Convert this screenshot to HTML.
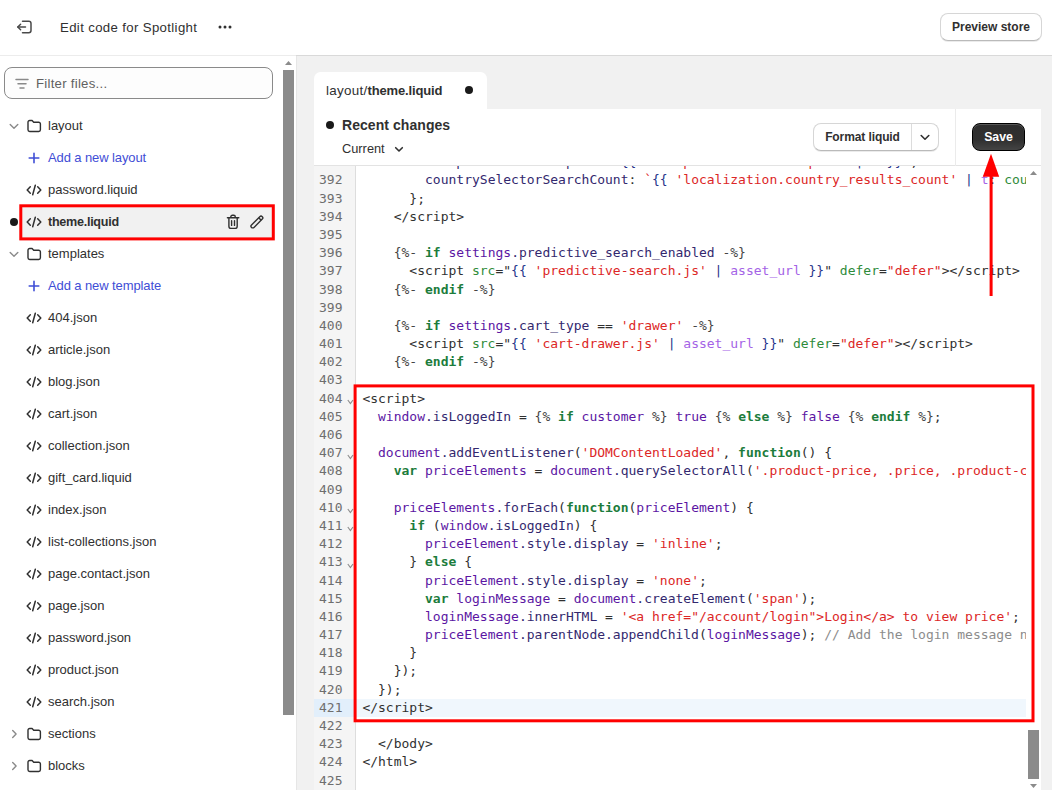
<!DOCTYPE html>
<html lang="en">
<head>
<meta charset="utf-8">
<title>Edit code for Spotlight</title>
<style>
*{box-sizing:border-box;margin:0;padding:0}
html,body{width:1052px;height:790px;overflow:hidden;background:#f1f1f1}
body{font-family:"Liberation Sans",sans-serif;color:#303030;position:relative;font-size:13px}
.abs{position:absolute}
/* header */
#hdr{position:absolute;left:0;top:0;width:1052px;height:56px;background:#fff;border-bottom:1px solid #d9d9d9;z-index:5}
#hdr:after{content:"";position:absolute;left:0;top:55px;width:296px;height:1px;background:#ececec}
#hdr .title{position:absolute;left:60px;top:19px;font-size:13.2px;line-height:18px;color:#303030;letter-spacing:.36px;white-space:nowrap}
#hdr .dots{position:absolute;left:218px;top:25px;width:14px;height:4px}
#hdr .prev{position:absolute;left:940px;top:13px;width:102px;height:28px;border:1px solid #d6d6d6;border-bottom-color:#bababa;border-radius:8px;background:#fff;font-weight:bold;font-size:12px;line-height:26px;text-align:center;color:#303030;white-space:nowrap;box-shadow:0 1px 0 rgba(0,0,0,.08)}
/* sidebar */
#side{position:absolute;left:0;top:56px;width:297px;height:734px;background:#fff;border-right:1px solid #e6e6e6}
#filter{position:absolute;left:4px;top:11px;width:269px;height:32px;border:1px solid #8a8a8a;border-radius:8px;background:#fdfdfd}
#filter span{position:absolute;left:31px;top:7px;font-size:13.2px;line-height:18px;color:#616161;white-space:nowrap;letter-spacing:.26px}
.row{position:absolute;left:0;width:283px;height:32px}
.row .t{position:absolute;left:48px;top:8px;font-size:13px;line-height:16px;white-space:nowrap;color:#303030}
.row .t.link{color:#3f4ed6;letter-spacing:-.1px}
.row svg{position:absolute}
.row.sel .t{font-weight:bold;font-size:12.6px;letter-spacing:-.28px}
#selbox{position:absolute;left:20px;top:149px;width:254px;height:35px;background:#f1f1f1}
#sbar{position:absolute;left:283px;top:0;width:13px;height:734px;background:#fff}
#sbar .thumb{position:absolute;left:0;top:14px;width:11px;height:645px;background:#8b8b8b}
/* main */
#tab{position:absolute;left:314px;top:72px;width:173px;height:38px;background:#fff;border-radius:6.5px 6.5px 0 0}
#tab .p{position:absolute;left:12px;top:10px;font-size:13.4px;line-height:18px;white-space:nowrap;color:#303030;letter-spacing:.3px}
#tab .p b{font-size:13px;letter-spacing:-.15px}
#tab .dot{position:absolute;left:151px;top:14px;width:8px;height:8px;border-radius:50%;background:#1a1a1a}
#card{position:absolute;left:314px;top:109px;width:727px;height:681px;background:#fff}
#tool{position:absolute;left:0;top:0;width:727px;height:57px;border-bottom:1px solid #e3e3e3}
#tool .rc{position:absolute;left:28px;top:7px;letter-spacing:.06px;font-size:14px;font-weight:bold;line-height:18px;color:#303030;white-space:nowrap}
#tool .rdot{position:absolute;left:12px;top:12px;width:8px;height:8px;border-radius:50%;background:#1a1a1a}
#tool .cur{position:absolute;left:28px;top:31px;font-size:12.8px;line-height:18px;color:#303030;white-space:nowrap}
#fmt{position:absolute;left:499px;top:14px;width:126px;height:28px;border:1px solid #d6d6d6;border-bottom-color:#bababa;border-radius:8px;background:#fff;box-shadow:0 1px 0 rgba(0,0,0,.08)}
#fmt .l{position:absolute;left:0;top:0;width:98px;height:26px;border-right:1px solid #dcdcdc;font-weight:bold;font-size:12px;letter-spacing:-.1px;line-height:26px;text-align:center;white-space:nowrap}
#sep{position:absolute;left:641px;top:0;width:1px;height:57px;background:#ebebeb}
#save{position:absolute;left:658px;top:14px;width:53px;height:28px;border-radius:8px;background:linear-gradient(180deg,#2e2e2e 0%,#303030 62%,#444 100%);border:1px solid #000;border-bottom-width:1.5px;color:#fff;font-weight:bold;font-size:12.3px;line-height:26px;text-align:center;box-shadow:inset 0 1px 0 rgba(255,255,255,.2)}
/* code */
#code{position:absolute;left:0;top:57px;width:712px;height:624px;overflow:hidden;background:#fff}
#gut{position:absolute;left:0;top:0;width:42px;height:624px;background:#f5f5f5;border-right:1px solid #ddd}
#lines{position:absolute;left:0;top:-12.8px;width:712px;font-family:"DejaVu Sans Mono","Liberation Mono",monospace;font-size:13px;line-height:18.2px;color:#303030}
.ln{position:relative;height:18.2px;white-space:pre}
.ln i{position:absolute;left:5px;top:0;font-style:normal;color:#6e6e6e}
.ln .fd{position:absolute;left:33px;top:9.3px}
.ln b{position:absolute;left:48.4px;top:0;font-weight:normal}
.ln.act{background:#f0f7fd}
.ln.act:before{content:"";position:absolute;left:0;top:0;width:41px;height:100%;background:#e2effb}
.k{color:#1c7c3c;font-weight:bold}
.v{color:#5b16a3}
.p{color:#33286e}
.s{color:#dc2626}
.a{color:#2e8b3a}
.d{color:#27348b}
.f{color:#a463e6}
.c{color:#8c8c8c}
.g{color:#454545}
#vs{position:absolute;left:713px;top:57px;width:14px;height:624px;background:#fff}
#vs .thumb{position:absolute;left:1px;top:564px;width:11px;height:49px;background:#8b8b8b}
#anno{position:absolute;left:0;top:0;z-index:9}
</style>
</head>
<body>
<div id="hdr">
  <svg class="abs" style="left:16px;top:18px" width="18" height="18" viewBox="0 0 18 18" fill="none" stroke="#4a4a4a" stroke-width="1.5" stroke-linecap="round" stroke-linejoin="round"><path d="M6.5 3.2h6.3a2.2 2.2 0 0 1 2.2 2.2v7.2a2.2 2.2 0 0 1-2.2 2.2H6.5"/><path d="M9.5 9H1.8"/><path d="M4.6 6.2 1.8 9l2.8 2.8"/></svg>
  <div class="title">Edit code for Spotlight</div>
  <svg class="dots" viewBox="0 0 14 4"><circle cx="2" cy="2" r="1.5" fill="#303030"/><circle cx="7" cy="2" r="1.5" fill="#303030"/><circle cx="12" cy="2" r="1.5" fill="#303030"/></svg>
  <div class="prev">Preview store</div>
</div>

<div id="side">
  <div id="filter">
    <svg class="abs" style="left:10px;top:10px" width="14" height="12" viewBox="0 0 14 12" fill="none" stroke="#8a8a8a" stroke-width="1.5" stroke-linecap="round"><path d="M1 1.5h12M3 5.8h8M5 10.1h4"/></svg>
    <span>Filter files...</span>
  </div>
  <div id="selbox"></div>
  <div id="rows">
<div class="row" style="top:54px"><svg style="left:9px;top:13px" width="10" height="7" viewBox="0 0 10 7" fill="none" stroke="#8a8a8a" stroke-width="1.4" stroke-linecap="round" stroke-linejoin="round"><path d="M1.2 1.4 5 5.2l3.8-3.8"/></svg><svg style="left:27px;top:9px" width="15" height="14" viewBox="0 0 15 14" fill="none" stroke="#303030" stroke-width="1.4" stroke-linejoin="round"><path d="M1 3.2A1.7 1.7 0 0 1 2.7 1.5h2.4l1.6 1.7h5A1.7 1.7 0 0 1 13.4 4.9v5.9a1.7 1.7 0 0 1-1.7 1.7H2.7A1.7 1.7 0 0 1 1 10.8z"/></svg><span class="t">layout</span></div>
<div class="row" style="top:86px"><svg style="left:28px;top:10px" width="12" height="12" viewBox="0 0 12 12" fill="none" stroke="#3f4ed6" stroke-width="1.6" stroke-linecap="round"><path d="M6 1.2v9.6M1.2 6h9.6"/></svg><span class="t link">Add a new layout</span></div>
<div class="row" style="top:118px"><svg style="left:26px;top:10px" width="16" height="12" viewBox="0 0 16 12" fill="none" stroke="#303030" stroke-width="1.5" stroke-linecap="round" stroke-linejoin="round"><path d="M4.3 2.8 1.2 6l3.1 3.2M11.7 2.8 14.8 6l-3.1 3.2M9.3 1.2 6.7 10.8"/></svg><span class="t">password.liquid</span></div>
<div class="row sel" style="top:150px"><svg style="left:10px;top:12px" width="8" height="8" viewBox="0 0 8 8"><circle cx="4" cy="4" r="4" fill="#1a1a1a"/></svg><svg style="left:26px;top:10px" width="16" height="12" viewBox="0 0 16 12" fill="none" stroke="#303030" stroke-width="1.5" stroke-linecap="round" stroke-linejoin="round"><path d="M4.3 2.8 1.2 6l3.1 3.2M11.7 2.8 14.8 6l-3.1 3.2M9.3 1.2 6.7 10.8"/></svg><span class="t">theme.liquid</span><svg style="left:226px;top:8px" width="15" height="16" viewBox="0 0 15 16" fill="none" stroke="#303030" stroke-width="1.4" stroke-linecap="round" stroke-linejoin="round"><path d="M1.4 3.7h11.4M4.8 3.5v-.6a1.6 1.6 0 0 1 1.6-1.6h1.3a1.6 1.6 0 0 1 1.6 1.6v.6M2.9 4v8.2a2.2 2.2 0 0 0 2.2 2.2h3.9a2.2 2.2 0 0 0 2.2-2.2V4M5.6 6.8v4.6M8.5 6.8v4.6"/></svg><svg style="left:249px;top:8px" width="16" height="16" viewBox="0 0 16 16" fill="none" stroke="#303030" stroke-width="1.4" stroke-linecap="round" stroke-linejoin="round"><g transform="rotate(-45 7.85 8.05)"><rect x="0.3" y="6.3" width="15.2" height="3.5" rx="1.75"/><path d="M12.2 6.3v3.5" stroke-linecap="butt"/></g></svg></div>
<div class="row" style="top:182px"><svg style="left:9px;top:13px" width="10" height="7" viewBox="0 0 10 7" fill="none" stroke="#8a8a8a" stroke-width="1.4" stroke-linecap="round" stroke-linejoin="round"><path d="M1.2 1.4 5 5.2l3.8-3.8"/></svg><svg style="left:27px;top:9px" width="15" height="14" viewBox="0 0 15 14" fill="none" stroke="#303030" stroke-width="1.4" stroke-linejoin="round"><path d="M1 3.2A1.7 1.7 0 0 1 2.7 1.5h2.4l1.6 1.7h5A1.7 1.7 0 0 1 13.4 4.9v5.9a1.7 1.7 0 0 1-1.7 1.7H2.7A1.7 1.7 0 0 1 1 10.8z"/></svg><span class="t">templates</span></div>
<div class="row" style="top:214px"><svg style="left:28px;top:10px" width="12" height="12" viewBox="0 0 12 12" fill="none" stroke="#3f4ed6" stroke-width="1.6" stroke-linecap="round"><path d="M6 1.2v9.6M1.2 6h9.6"/></svg><span class="t link">Add a new template</span></div>
<div class="row" style="top:246px"><svg style="left:26px;top:10px" width="16" height="12" viewBox="0 0 16 12" fill="none" stroke="#303030" stroke-width="1.5" stroke-linecap="round" stroke-linejoin="round"><path d="M4.3 2.8 1.2 6l3.1 3.2M11.7 2.8 14.8 6l-3.1 3.2M9.3 1.2 6.7 10.8"/></svg><span class="t">404.json</span></div>
<div class="row" style="top:278px"><svg style="left:26px;top:10px" width="16" height="12" viewBox="0 0 16 12" fill="none" stroke="#303030" stroke-width="1.5" stroke-linecap="round" stroke-linejoin="round"><path d="M4.3 2.8 1.2 6l3.1 3.2M11.7 2.8 14.8 6l-3.1 3.2M9.3 1.2 6.7 10.8"/></svg><span class="t">article.json</span></div>
<div class="row" style="top:310px"><svg style="left:26px;top:10px" width="16" height="12" viewBox="0 0 16 12" fill="none" stroke="#303030" stroke-width="1.5" stroke-linecap="round" stroke-linejoin="round"><path d="M4.3 2.8 1.2 6l3.1 3.2M11.7 2.8 14.8 6l-3.1 3.2M9.3 1.2 6.7 10.8"/></svg><span class="t">blog.json</span></div>
<div class="row" style="top:342px"><svg style="left:26px;top:10px" width="16" height="12" viewBox="0 0 16 12" fill="none" stroke="#303030" stroke-width="1.5" stroke-linecap="round" stroke-linejoin="round"><path d="M4.3 2.8 1.2 6l3.1 3.2M11.7 2.8 14.8 6l-3.1 3.2M9.3 1.2 6.7 10.8"/></svg><span class="t">cart.json</span></div>
<div class="row" style="top:374px"><svg style="left:26px;top:10px" width="16" height="12" viewBox="0 0 16 12" fill="none" stroke="#303030" stroke-width="1.5" stroke-linecap="round" stroke-linejoin="round"><path d="M4.3 2.8 1.2 6l3.1 3.2M11.7 2.8 14.8 6l-3.1 3.2M9.3 1.2 6.7 10.8"/></svg><span class="t">collection.json</span></div>
<div class="row" style="top:406px"><svg style="left:26px;top:10px" width="16" height="12" viewBox="0 0 16 12" fill="none" stroke="#303030" stroke-width="1.5" stroke-linecap="round" stroke-linejoin="round"><path d="M4.3 2.8 1.2 6l3.1 3.2M11.7 2.8 14.8 6l-3.1 3.2M9.3 1.2 6.7 10.8"/></svg><span class="t">gift_card.liquid</span></div>
<div class="row" style="top:438px"><svg style="left:26px;top:10px" width="16" height="12" viewBox="0 0 16 12" fill="none" stroke="#303030" stroke-width="1.5" stroke-linecap="round" stroke-linejoin="round"><path d="M4.3 2.8 1.2 6l3.1 3.2M11.7 2.8 14.8 6l-3.1 3.2M9.3 1.2 6.7 10.8"/></svg><span class="t">index.json</span></div>
<div class="row" style="top:470px"><svg style="left:26px;top:10px" width="16" height="12" viewBox="0 0 16 12" fill="none" stroke="#303030" stroke-width="1.5" stroke-linecap="round" stroke-linejoin="round"><path d="M4.3 2.8 1.2 6l3.1 3.2M11.7 2.8 14.8 6l-3.1 3.2M9.3 1.2 6.7 10.8"/></svg><span class="t">list-collections.json</span></div>
<div class="row" style="top:502px"><svg style="left:26px;top:10px" width="16" height="12" viewBox="0 0 16 12" fill="none" stroke="#303030" stroke-width="1.5" stroke-linecap="round" stroke-linejoin="round"><path d="M4.3 2.8 1.2 6l3.1 3.2M11.7 2.8 14.8 6l-3.1 3.2M9.3 1.2 6.7 10.8"/></svg><span class="t">page.contact.json</span></div>
<div class="row" style="top:534px"><svg style="left:26px;top:10px" width="16" height="12" viewBox="0 0 16 12" fill="none" stroke="#303030" stroke-width="1.5" stroke-linecap="round" stroke-linejoin="round"><path d="M4.3 2.8 1.2 6l3.1 3.2M11.7 2.8 14.8 6l-3.1 3.2M9.3 1.2 6.7 10.8"/></svg><span class="t">page.json</span></div>
<div class="row" style="top:566px"><svg style="left:26px;top:10px" width="16" height="12" viewBox="0 0 16 12" fill="none" stroke="#303030" stroke-width="1.5" stroke-linecap="round" stroke-linejoin="round"><path d="M4.3 2.8 1.2 6l3.1 3.2M11.7 2.8 14.8 6l-3.1 3.2M9.3 1.2 6.7 10.8"/></svg><span class="t">password.json</span></div>
<div class="row" style="top:598px"><svg style="left:26px;top:10px" width="16" height="12" viewBox="0 0 16 12" fill="none" stroke="#303030" stroke-width="1.5" stroke-linecap="round" stroke-linejoin="round"><path d="M4.3 2.8 1.2 6l3.1 3.2M11.7 2.8 14.8 6l-3.1 3.2M9.3 1.2 6.7 10.8"/></svg><span class="t">product.json</span></div>
<div class="row" style="top:630px"><svg style="left:26px;top:10px" width="16" height="12" viewBox="0 0 16 12" fill="none" stroke="#303030" stroke-width="1.5" stroke-linecap="round" stroke-linejoin="round"><path d="M4.3 2.8 1.2 6l3.1 3.2M11.7 2.8 14.8 6l-3.1 3.2M9.3 1.2 6.7 10.8"/></svg><span class="t">search.json</span></div>
<div class="row" style="top:662px"><svg style="left:11px;top:11px" width="7" height="10" viewBox="0 0 7 10" fill="none" stroke="#8a8a8a" stroke-width="1.4" stroke-linecap="round" stroke-linejoin="round"><path d="M1.7 1.6 5.1 5 1.7 8.4"/></svg><svg style="left:27px;top:9px" width="15" height="14" viewBox="0 0 15 14" fill="none" stroke="#303030" stroke-width="1.4" stroke-linejoin="round"><path d="M1 3.2A1.7 1.7 0 0 1 2.7 1.5h2.4l1.6 1.7h5A1.7 1.7 0 0 1 13.4 4.9v5.9a1.7 1.7 0 0 1-1.7 1.7H2.7A1.7 1.7 0 0 1 1 10.8z"/></svg><span class="t">sections</span></div>
<div class="row" style="top:694px"><svg style="left:11px;top:11px" width="7" height="10" viewBox="0 0 7 10" fill="none" stroke="#8a8a8a" stroke-width="1.4" stroke-linecap="round" stroke-linejoin="round"><path d="M1.7 1.6 5.1 5 1.7 8.4"/></svg><svg style="left:27px;top:9px" width="15" height="14" viewBox="0 0 15 14" fill="none" stroke="#303030" stroke-width="1.4" stroke-linejoin="round"><path d="M1 3.2A1.7 1.7 0 0 1 2.7 1.5h2.4l1.6 1.7h5A1.7 1.7 0 0 1 13.4 4.9v5.9a1.7 1.7 0 0 1-1.7 1.7H2.7A1.7 1.7 0 0 1 1 10.8z"/></svg><span class="t">blocks</span></div>
</div>
  <div id="sbar"><svg class="abs" style="left:2px;top:5px" width="7" height="4" viewBox="0 0 8 5" preserveAspectRatio="none"><path d="M0 5 4 0l4 5z" fill="#8b8b8b"/></svg><div class="thumb"></div></div>
</div>

<div id="tab"><div class="p">layout/<b>theme.liquid</b></div><div class="dot"></div></div>
<div id="card">
  <div id="tool">
    <div class="rdot"></div>
    <div class="rc">Recent changes</div>
    <div class="cur">Current</div>
    <svg class="abs" style="left:80px;top:37px" width="10" height="7" viewBox="0 0 10 7" fill="none" stroke="#303030" stroke-width="1.6" stroke-linecap="round" stroke-linejoin="round"><path d="M1.7 1.7 5 5l3.3-3.3"/></svg>
    <div id="fmt"><div class="l">Format liquid</div><svg class="abs" style="left:106px;top:10px" width="10" height="7" viewBox="0 0 10 7" fill="none" stroke="#303030" stroke-width="1.6" stroke-linecap="round" stroke-linejoin="round"><path d="M1.2 1.5 5 5.2l3.8-3.7"/></svg></div>
    <div id="sep"></div>
    <div id="save">Save</div>
  </div>
  <div id="code">
    <div id="gut"></div>
    <div id="lines">
<div class="ln"><b>        <span class="p">recipientFormCollapsed</span>: <span class="s">`</span><span class="d">{{</span> <span class="s">'recipient.form.collapsed'</span> <span class="d">|</span> <span class="f">t</span> <span class="d">}}</span><span class="s">`</span>,</b></div>
<div class="ln"><i>392</i><b>        <span class="p">countrySelectorSearchCount</span>: <span class="s">`</span><span class="d">{{</span> <span class="s">'localization.country_results_count'</span> <span class="d">|</span> <span class="f">t</span>: <span class="a">count</span>: <span class="s">'[count]'</span> <span class="d">}}</span><span class="s">`</span>,</b></div>
<div class="ln"><i>393</i><b>      };</b></div>
<div class="ln"><i>394</i><b>    &lt;/script&gt;</b></div>
<div class="ln"><i>395</i><b></b></div>
<div class="ln"><i>396</i><b>    <span class="g">{%-</span> <span class="k">if</span> <span class="v">settings</span><span class="p">.predictive_search_enabled</span> <span class="g">-%}</span></b></div>
<div class="ln"><i>397</i><b>      &lt;script <span class="a">src</span>="<span class="d">{{</span> <span class="s">'predictive-search.js'</span> <span class="d">|</span> <span class="f">asset_url</span> <span class="d">}}</span>" <span class="a">defer</span>=<span class="s">"defer"</span>&gt;&lt;/script&gt;</b></div>
<div class="ln"><i>398</i><b>    <span class="g">{%-</span> <span class="k">endif</span> <span class="g">-%}</span></b></div>
<div class="ln"><i>399</i><b></b></div>
<div class="ln"><i>400</i><b>    <span class="g">{%-</span> <span class="k">if</span> <span class="v">settings</span><span class="p">.cart_type</span> == <span class="s">'drawer'</span> <span class="g">-%}</span></b></div>
<div class="ln"><i>401</i><b>      &lt;script <span class="a">src</span>="<span class="d">{{</span> <span class="s">'cart-drawer.js'</span> <span class="d">|</span> <span class="f">asset_url</span> <span class="d">}}</span>" <span class="a">defer</span>=<span class="s">"defer"</span>&gt;&lt;/script&gt;</b></div>
<div class="ln"><i>402</i><b>    <span class="g">{%-</span> <span class="k">endif</span> <span class="g">-%}</span></b></div>
<div class="ln"><i>403</i><b></b></div>
<div class="ln"><i>404</i><svg class="fd" width="7" height="6" viewBox="0 0 7 6"><path d="M.8 1 3.4 4.6 6 1" fill="none" stroke="#8c8c8c" stroke-width="1.1"/></svg><b>&lt;script&gt;</b></div>
<div class="ln"><i>405</i><b>  <span class="v">window</span><span class="p">.isLoggedIn</span> = <span class="g">{%</span> <span class="k">if</span> <span class="v">customer</span> <span class="g">%}</span> <span class="v">true</span> <span class="g">{%</span> <span class="k">else</span> <span class="g">%}</span> <span class="v">false</span> <span class="g">{%</span> <span class="k">endif</span> <span class="g">%}</span>;</b></div>
<div class="ln"><i>406</i><b></b></div>
<div class="ln"><i>407</i><svg class="fd" width="7" height="6" viewBox="0 0 7 6"><path d="M.8 1 3.4 4.6 6 1" fill="none" stroke="#8c8c8c" stroke-width="1.1"/></svg><b>  <span class="v">document</span><span class="p">.addEventListener</span>(<span class="s">'DOMContentLoaded'</span>, <span class="k">function</span>() {</b></div>
<div class="ln"><i>408</i><b>    <span class="k">var</span> <span class="v">priceElements</span> = <span class="v">document</span><span class="p">.querySelectorAll</span>(<span class="s">'.product-price, .price, .product-card__price, .price-item'</span>);</b></div>
<div class="ln"><i>409</i><b></b></div>
<div class="ln"><i>410</i><svg class="fd" width="7" height="6" viewBox="0 0 7 6"><path d="M.8 1 3.4 4.6 6 1" fill="none" stroke="#8c8c8c" stroke-width="1.1"/></svg><b>    <span class="v">priceElements</span><span class="p">.forEach</span>(<span class="k">function</span>(<span class="v">priceElement</span>) {</b></div>
<div class="ln"><i>411</i><svg class="fd" width="7" height="6" viewBox="0 0 7 6"><path d="M.8 1 3.4 4.6 6 1" fill="none" stroke="#8c8c8c" stroke-width="1.1"/></svg><b>      <span class="k">if</span> (<span class="v">window</span><span class="p">.isLoggedIn</span>) {</b></div>
<div class="ln"><i>412</i><b>        <span class="v">priceElement</span><span class="p">.style.display</span> = <span class="s">'inline'</span>;</b></div>
<div class="ln"><i>413</i><svg class="fd" width="7" height="6" viewBox="0 0 7 6"><path d="M.8 1 3.4 4.6 6 1" fill="none" stroke="#8c8c8c" stroke-width="1.1"/></svg><b>      } <span class="k">else</span> {</b></div>
<div class="ln"><i>414</i><b>        <span class="v">priceElement</span><span class="p">.style.display</span> = <span class="s">'none'</span>;</b></div>
<div class="ln"><i>415</i><b>        <span class="k">var</span> <span class="v">loginMessage</span> = <span class="v">document</span><span class="p">.createElement</span>(<span class="s">'span'</span>);</b></div>
<div class="ln"><i>416</i><b>        <span class="v">loginMessage</span><span class="p">.innerHTML</span> = <span class="s">'&lt;a href="/account/login"&gt;Login&lt;/a&gt; to view price'</span>;</b></div>
<div class="ln"><i>417</i><b>        <span class="v">priceElement</span><span class="p">.parentNode.appendChild</span>(<span class="v">loginMessage</span>); <span class="c">// Add the login message next to the price</span></b></div>
<div class="ln"><i>418</i><b>      }</b></div>
<div class="ln"><i>419</i><b>    });</b></div>
<div class="ln"><i>420</i><b>  });</b></div>
<div class="ln act"><i>421</i><b>&lt;/script&gt;</b></div>
<div class="ln"><i>422</i><b></b></div>
<div class="ln"><i>423</i><b>  &lt;/body&gt;</b></div>
<div class="ln"><i>424</i><b>&lt;/html&gt;</b></div>
<div class="ln"><i>425</i><b></b></div>
</div>
  </div>
  <div id="vs"><svg class="abs" style="left:3px;top:5.4px" width="7" height="4" viewBox="0 0 8 5" preserveAspectRatio="none"><path d="M0 5 4 0l4 5z" fill="#8b8b8b"/></svg><div class="thumb"></div><svg class="abs" style="left:3px;top:618.2px" width="7" height="4" viewBox="0 0 8 5" preserveAspectRatio="none"><path d="M0 0h8L4 5z" fill="#8b8b8b"/></svg></div>
</div>
<svg id="anno" width="1052" height="790" viewBox="0 0 1052 790">
<rect x="20.8" y="205.8" width="252.5" height="33.1" fill="none" stroke="#ff0000" stroke-width="3"/>
<rect x="355.1" y="385.9" width="677.9" height="334.9" fill="none" stroke="#ff0000" stroke-width="3"/>
<path d="M991 153.8 982.8 176.8h16.4z" fill="#ff0000"/>
<rect x="989.6" y="170" width="3" height="126" fill="#ff0000"/>
</svg>
</body>
</html>
